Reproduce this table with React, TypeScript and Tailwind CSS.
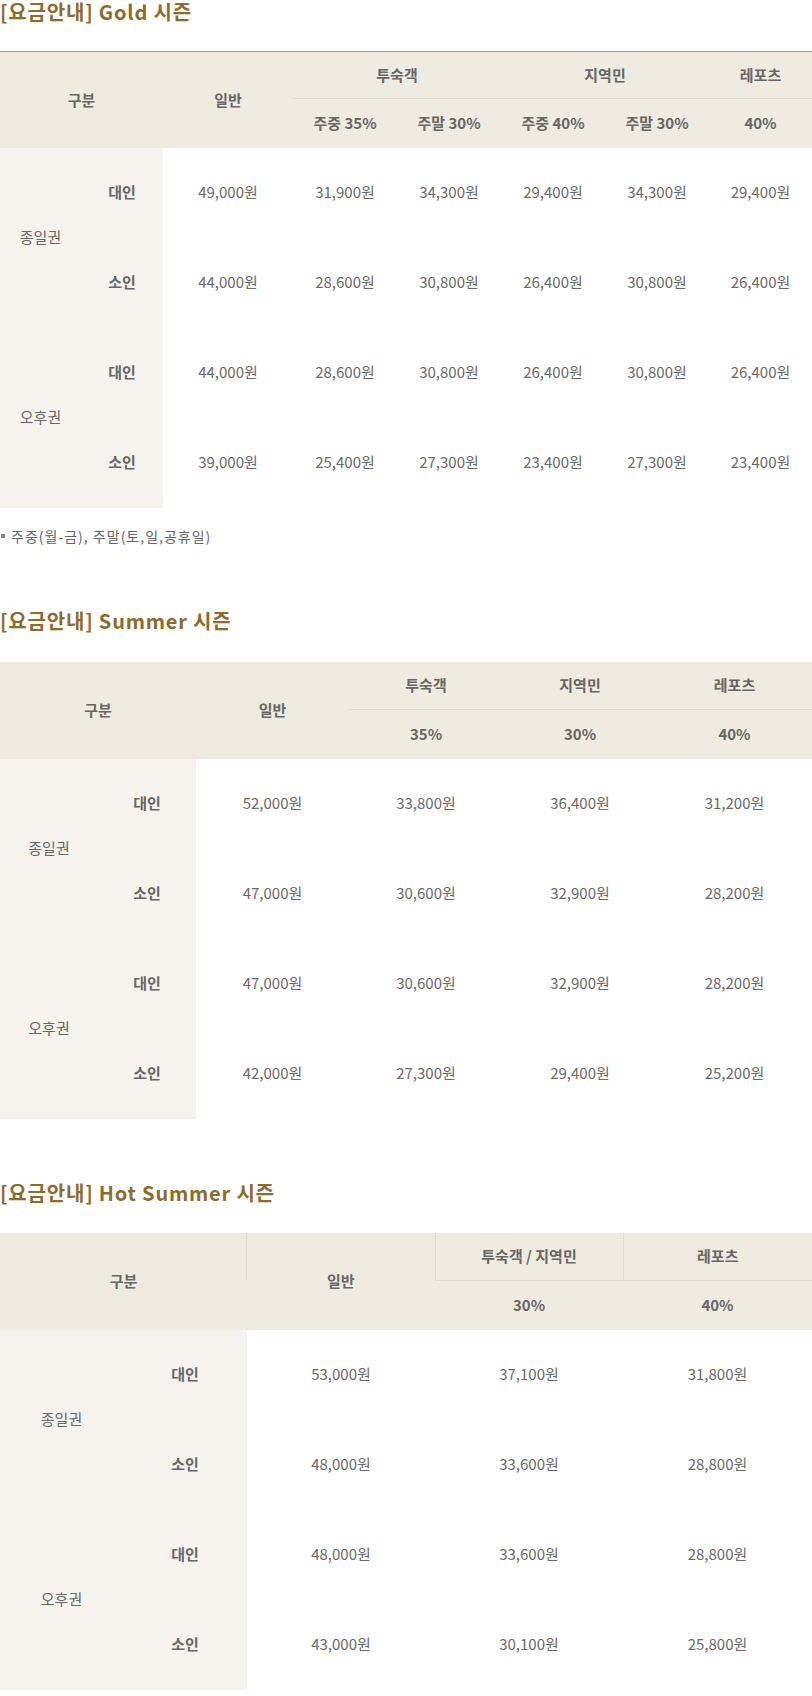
const font = "font-['Noto_Sans_CJK_KR','Noto_Sans',sans-serif]";

type Row = { group: string; label: string; prices: string[] };

const goldRows: Row[] = [
  { group: "종일권", label: "대인", prices: ["49,000원", "31,900원", "34,300원", "29,400원", "34,300원", "29,400원"] },
  { group: "종일권", label: "소인", prices: ["44,000원", "28,600원", "30,800원", "26,400원", "30,800원", "26,400원"] },
  { group: "오후권", label: "대인", prices: ["44,000원", "28,600원", "30,800원", "26,400원", "30,800원", "26,400원"] },
  { group: "오후권", label: "소인", prices: ["39,000원", "25,400원", "27,300원", "23,400원", "27,300원", "23,400원"] },
];

const summerRows: Row[] = [
  { group: "종일권", label: "대인", prices: ["52,000원", "33,800원", "36,400원", "31,200원"] },
  { group: "종일권", label: "소인", prices: ["47,000원", "30,600원", "32,900원", "28,200원"] },
  { group: "오후권", label: "대인", prices: ["47,000원", "30,600원", "32,900원", "28,200원"] },
  { group: "오후권", label: "소인", prices: ["42,000원", "27,300원", "29,400원", "25,200원"] },
];

const hotRows: Row[] = [
  { group: "종일권", label: "대인", prices: ["53,000원", "37,100원", "31,800원"] },
  { group: "종일권", label: "소인", prices: ["48,000원", "33,600원", "28,800원"] },
  { group: "오후권", label: "대인", prices: ["48,000원", "33,600원", "28,800원"] },
  { group: "오후권", label: "소인", prices: ["43,000원", "30,100원", "25,800원"] },
];

function Title({ children }: { children: React.ReactNode }) {
  return <h2 className="text-[20px] leading-[24px] font-bold text-[#8b6b2e] tracking-[0.8px]">{children}</h2>;
}

function Body({ rows }: { rows: Row[] }) {
  return (
    <tbody>
      {rows.map((r, i) => (
        <tr key={i} className="h-[90px]">
          {i % 2 === 0 && (
            <th rowSpan={2} className="bg-[#f6f3ee] font-normal text-center text-[#666]">
              {r.group}
            </th>
          )}
          <th className="bg-[#f6f3ee] font-bold text-center text-[#666]">{r.label}</th>
          {r.prices.map((p, j) => (
            <td key={j} className="text-center text-[#6a6a6a]">
              {p}
            </td>
          ))}
        </tr>
      ))}
    </tbody>
  );
}

const th = "bg-[#efebe1] font-bold text-center text-[#666]";
const sub = "bg-[#efebe1] font-bold text-center text-[#666] border-t border-[#e2ddd1]";

export default function App() {
  return (
    <div className={`${font} w-[812px] bg-white text-[15px] pb-[8px]`}>
      {/* Gold */}
      <Title>[요금안내] Gold 시즌</Title>
      <table className="w-full table-fixed mt-[27px] border-t border-[#b09767]">
        <colgroup>
          <col className="w-[81px]" />
          <col className="w-[82px]" />
          <col className="w-[130px]" />
          <col className="w-[104px]" />
          <col className="w-[104px]" />
          <col className="w-[104px]" />
          <col className="w-[104px]" />
          <col />
        </colgroup>
        <thead>
          <tr className="h-[47px]">
            <th colSpan={2} rowSpan={2} className={th}>구분</th>
            <th rowSpan={2} className={th}>일반</th>
            <th colSpan={2} className={th}>투숙객</th>
            <th colSpan={2} className={th}>지역민</th>
            <th className={th}>레포츠</th>
          </tr>
          <tr className="h-[49px]">
            <th className={sub}>주중 35%</th>
            <th className={sub}>주말 30%</th>
            <th className={sub}>주중 40%</th>
            <th className={sub}>주말 30%</th>
            <th className={sub}>40%</th>
          </tr>
        </thead>
        <Body rows={goldRows} />
      </table>
      <p className="mt-[18px] flex items-center gap-[6px] text-[14px] leading-[20px] tracking-[1px] text-[#666]">
        <span className="w-[4px] h-[4px] bg-[#7b8194] ml-[1px]" />
        주중(월-금), 주말(토,일,공휴일)
      </p>

      {/* Summer */}
      <div className="mt-[63px]">
        <Title>[요금안내] Summer 시즌</Title>
      </div>
      <table className="w-full table-fixed mt-[29px]">
        <colgroup>
          <col className="w-[98px]" />
          <col className="w-[98px]" />
          <col className="w-[153px]" />
          <col className="w-[154px]" />
          <col className="w-[154px]" />
          <col />
        </colgroup>
        <thead>
          <tr className="h-[48px]">
            <th colSpan={2} rowSpan={2} className={th}>구분</th>
            <th rowSpan={2} className={th}>일반</th>
            <th className={th}>투숙객</th>
            <th className={th}>지역민</th>
            <th className={th}>레포츠</th>
          </tr>
          <tr className="h-[49px]">
            <th className={sub}>35%</th>
            <th className={sub}>30%</th>
            <th className={sub}>40%</th>
          </tr>
        </thead>
        <Body rows={summerRows} />
      </table>

      {/* Hot Summer */}
      <div className="mt-[62px]">
        <Title>[요금안내] Hot Summer 시즌</Title>
      </div>
      <table className="w-full table-fixed mt-[28px]">
        <colgroup>
          <col className="w-[123px]" />
          <col className="w-[124px]" />
          <col className="w-[188px]" />
          <col className="w-[188px]" />
          <col />
        </colgroup>
        <thead>
          <tr className="h-[48px]">
            <th
              colSpan={2}
              rowSpan={2}
              className={`${th} bg-[linear-gradient(#e2ddd1,#e2ddd1)] bg-no-repeat bg-right-top bg-[length:1px_48px]`}
            >
              구분
            </th>
            <th rowSpan={2} className={th}>일반</th>
            <th className={`${th} border-x border-b border-[#e2ddd1]`}>투숙객 / 지역민</th>
            <th className={`${th} border-b border-[#e2ddd1]`}>레포츠</th>
          </tr>
          <tr className="h-[49px]">
            <th className={th}>30%</th>
            <th className={th}>40%</th>
          </tr>
        </thead>
        <Body rows={hotRows} />
      </table>
    </div>
  );
}
